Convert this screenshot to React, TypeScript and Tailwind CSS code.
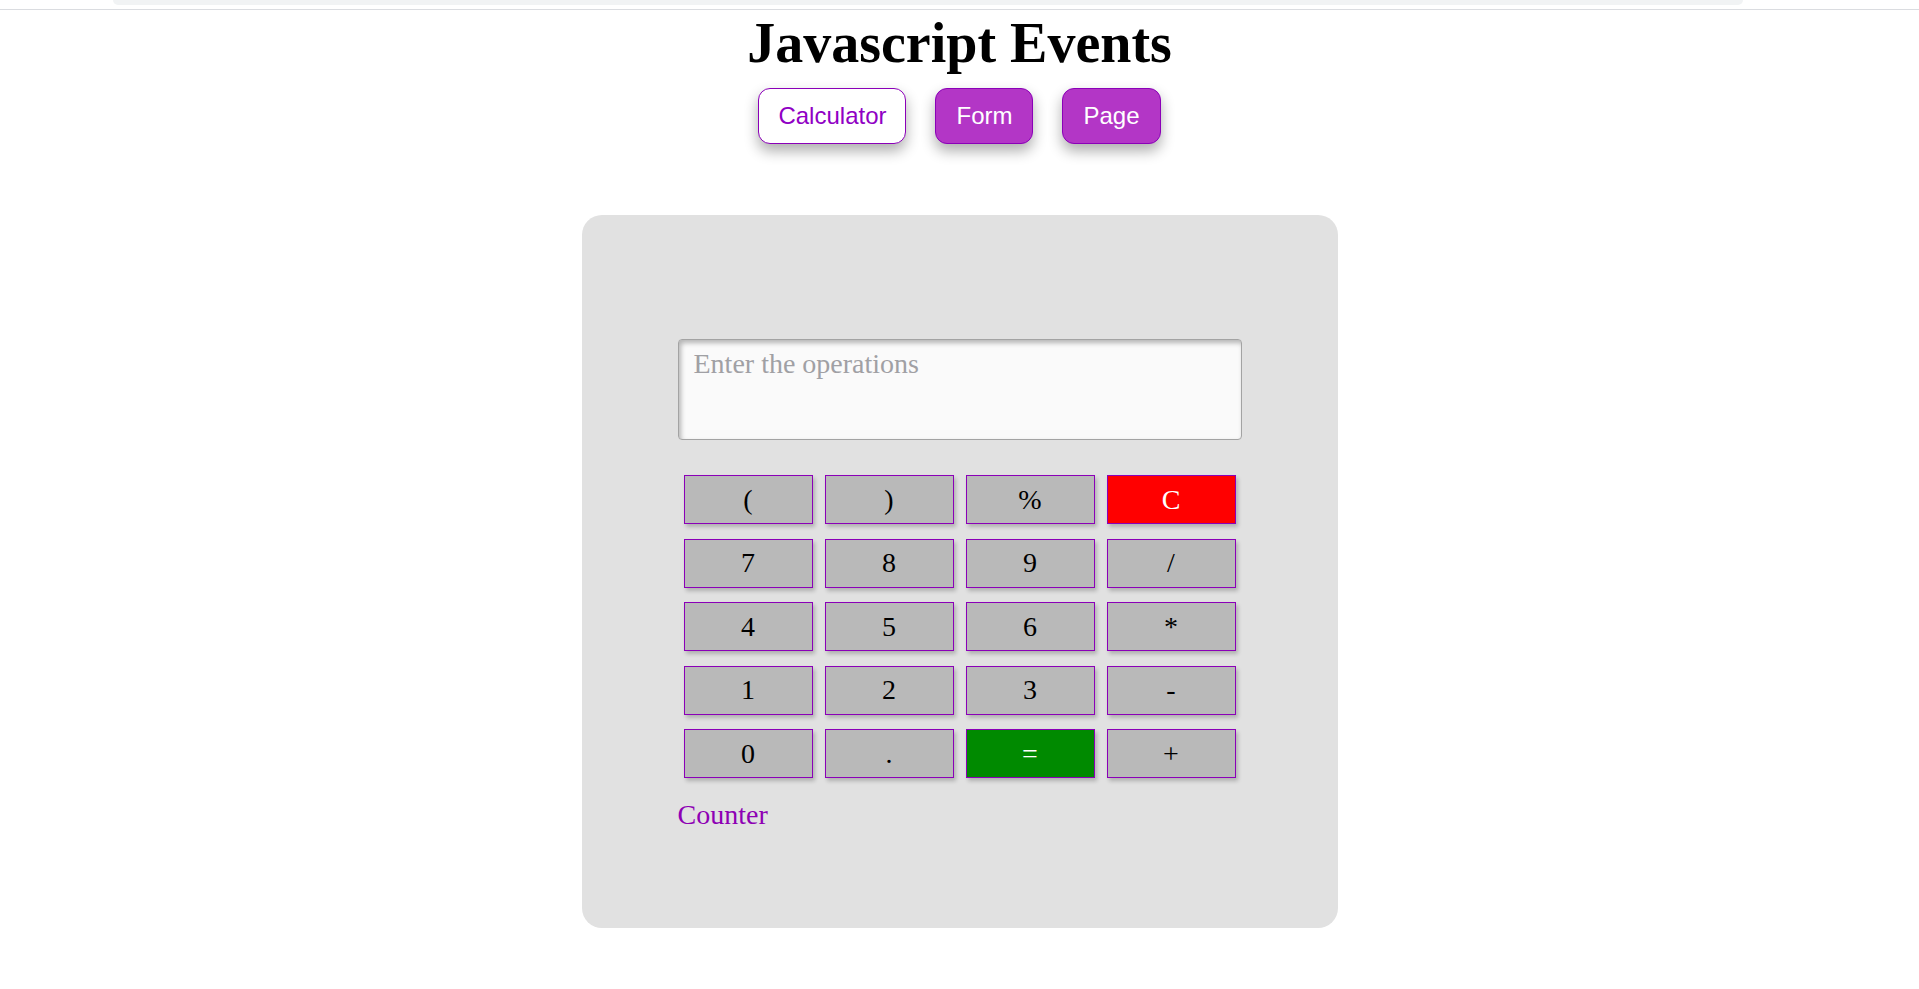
const keys = [
  "(", ")", "%", "C",
  "7", "8", "9", "/",
  "4", "5", "6", "*",
  "1", "2", "3", "-",
  "0", ".", "=", "+",
];

const keyColor = (k: string) => {
  if (k === "C") return "bg-[#ff0000] text-white";
  if (k === "=") return "bg-[#008a00] text-white";
  return "bg-[#b9b9b9] text-black";
};

const App = () => {
  return (
    <div className="min-h-screen bg-white font-['Liberation_Serif',serif]">
      {/* browser chrome remnant */}
      <div className="h-[10px] border-b border-[#dadce0]">
        <div className="ml-[113px] h-[5px] w-[1630px] rounded-b-[10px] bg-[#f1f3f4]" />
      </div>

      <div className="flex flex-col items-center">
        <h1 className="mt-[1px] text-[56px] font-bold leading-[64px] text-black">
          Javascript Events
        </h1>

        <div className="mt-[13px] flex gap-[29px] font-['Liberation_Sans',Arial,sans-serif] text-[24px]">
          <button className="h-[56px] rounded-[12px] border border-[#8b00b8] bg-white px-[19px] text-[#9000c4] shadow-[0_7px_14px_rgba(0,0,0,0.32)]">
            Calculator
          </button>
          <button className="h-[56px] rounded-[12px] border border-[#8b00b8] bg-[#b336c6] px-[20px] text-white shadow-[0_7px_14px_rgba(0,0,0,0.32)]">
            Form
          </button>
          <button className="h-[56px] rounded-[12px] border border-[#8b00b8] bg-[#b336c6] px-[20px] text-white shadow-[0_7px_14px_rgba(0,0,0,0.32)]">
            Page
          </button>
        </div>

        <div className="mt-[71px] h-[713px] w-[756px] rounded-[20px] bg-[#e1e1e1] pl-[96px] pt-[124px]">
          <textarea
            placeholder="Enter the operations"
            className="block h-[101px] w-[564px] resize-none rounded-[4px] border border-[#a3a3a3] bg-[#fafafa] px-[15px] pt-[8px] font-['Liberation_Serif',serif] text-[28px] leading-[32px] shadow-[inset_2px_3px_5px_rgba(0,0,0,0.28)] outline-none placeholder:text-[#a0a0a4]"
          />

          <div className="ml-[6px] mt-[35px] grid grid-cols-[repeat(4,129px)] gap-x-[12px] gap-y-[14.5px]">
            {keys.map((k) => (
              <button
                key={k}
                className={`flex h-[49px] items-center justify-center border border-[#8b00b8] text-[28px] leading-none shadow-[2px_3px_4px_rgba(0,0,0,0.22)] ${keyColor(k)}`}
              >
                {k}
              </button>
            ))}
          </div>

          <div className="mt-[21px] text-[28px] leading-[32px] text-[#8e00b4]">Counter</div>
        </div>
      </div>
    </div>
  );
};

export default App;
